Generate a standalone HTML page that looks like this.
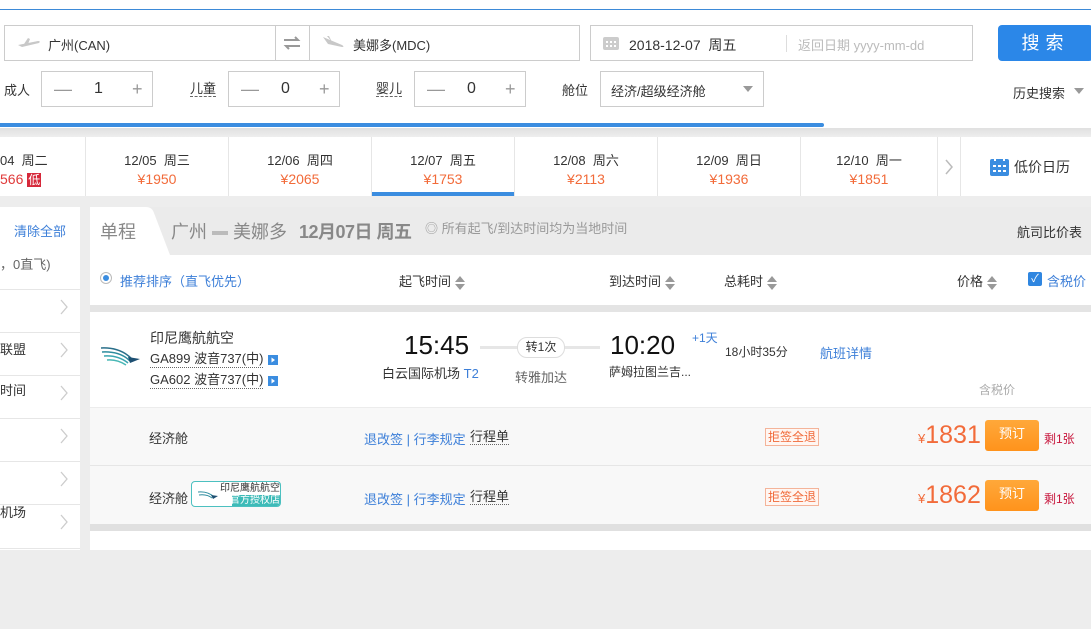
<!DOCTYPE html>
<html><head><meta charset="utf-8"><style>
*{margin:0;padding:0;box-sizing:border-box}
body{width:1091px;height:550px;overflow:hidden;background:#ededed;font-family:"Liberation Sans","Noto Sans CJK SC",sans-serif;font-size:13px;color:#333;position:relative}
.a{position:absolute;white-space:nowrap}
.box{position:absolute;border:1px solid #ccc;background:#fff}
.cnt{position:absolute;border:1px solid #ccc;background:#fff;height:36px;top:71px;width:112px}
.cnt span{position:absolute;top:7px;font-size:18px;color:#999}
.cnt b{position:absolute;top:8px;left:52px;font-weight:normal;font-size:16px;color:#333}
.cell{position:absolute;top:137px;height:59px;background:#fff;border-right:1px solid #e6e6e6;text-align:center;font-size:13px}
.cell .d{margin-top:13px;color:#333}
.cell .p{color:#f26b3a;font-size:14px;margin-top:2px}
.sb{position:absolute;left:0;width:80px;height:1px;background:#e6e6e6}
.chev{position:absolute;left:61px;width:8px;height:14px}
.blue{color:#3d7fd8}
.srt{display:inline-block;vertical-align:middle;margin-left:4px;width:10px;height:14px;position:relative}
.srt:before{content:"";position:absolute;left:0;top:0;border:5px solid transparent;border-bottom:6px solid #999;border-top:0}
.srt:after{content:"";position:absolute;left:0;top:8px;border:5px solid transparent;border-top:6px solid #999;border-bottom:0}
</style></head><body>
<div class="a" style="left:0;top:0;width:1091px;height:128px;background:#fff"></div>
<div class="a" style="left:0;top:9px;width:1091px;height:1px;background:#3d8ad8"></div>
<div class="box" style="left:4px;top:25px;width:576px;height:36px"></div>
<div class="a" style="left:275px;top:26px;width:1px;height:34px;background:#ccc"></div>
<div class="a" style="left:309px;top:26px;width:1px;height:34px;background:#ccc"></div>
<svg class="a" style="left:16px;top:36px" width="26" height="14"><path d="M2 9 L22 5 Q25 5 23 7 L6 11 Z M8 8 L12 2 L14 3 L12 8Z" fill="#c8c8c8"/></svg>
<div class="a" style="left:48px;top:35px;font-size:13px">广州(CAN)</div>
<svg class="a" style="left:282px;top:35px" width="20" height="16"><path d="M2 5 H16 L13 2 M18 11 H4 L7 14" stroke="#999" stroke-width="2" fill="none"/></svg>
<svg class="a" style="left:320px;top:34px" width="26" height="16"><path d="M3 3 L22 11 Q25 13 22 13 L8 10Z M7 2 L9 2 L12 8" fill="#c8c8c8"/></svg>
<div class="a" style="left:353px;top:35px">美娜多(MDC)</div>
<div class="box" style="left:590px;top:25px;width:383px;height:36px"></div>
<svg class="a" style="left:602px;top:34px" width="18" height="17"><rect x="1" y="3" width="16" height="13" rx="2" fill="#ccc"/><g fill="#fff"><rect x="4" y="7" width="2" height="2"/><rect x="8" y="7" width="2" height="2"/><rect x="12" y="7" width="2" height="2"/><rect x="4" y="11" width="2" height="2"/><rect x="8" y="11" width="2" height="2"/><rect x="12" y="11" width="2" height="2"/></g></svg>
<div class="a" style="left:629px;top:35px;font-size:14px">2018-12-07&nbsp;&nbsp;周五</div>
<div class="a" style="left:786px;top:35px;width:1px;height:17px;background:#ddd"></div>
<div class="a" style="left:798px;top:35px;color:#bbb">返回日期 yyyy-mm-dd</div>
<div class="a" style="left:998px;top:25px;width:95px;height:36px;background:#2b87e8;border-radius:4px;color:#fff;font-size:18px;text-align:center;line-height:36px;letter-spacing:6px">搜索</div>
<div class="a" style="left:4px;top:80px">成人</div>
<div class="cnt" style="left:41px"><span style="left:12px">—</span><b>1</b><span style="left:90px">+</span></div>
<div class="a" style="left:190px;top:81px;border-bottom:1px dashed #666;line-height:15px">儿童</div>
<div class="cnt" style="left:228px"><span style="left:12px">—</span><b>0</b><span style="left:90px">+</span></div>
<div class="a" style="left:376px;top:81px;border-bottom:1px dashed #666;line-height:15px">婴儿</div>
<div class="cnt" style="left:414px"><span style="left:12px">—</span><b>0</b><span style="left:90px">+</span></div>
<div class="a" style="left:562px;top:80px">舱位</div>
<div class="box" style="left:600px;top:71px;width:164px;height:36px"></div>
<div class="a" style="left:611px;top:81px">经济/超级经济舱</div>
<div class="a" style="left:743px;top:86px;border:5px solid transparent;border-top:6px solid #999"></div>
<div class="a" style="left:1013px;top:83px">历史搜索</div>
<div class="a" style="left:1074px;top:88px;border:5px solid transparent;border-top:6px solid #999"></div>
<div class="a" style="left:0;top:123px;width:824px;height:4px;background:#3b8de0;border-radius:0 2px 2px 0"></div>
<div class="a" style="left:0;top:128px;width:1091px;height:9px;background:linear-gradient(#e0e0e0,#eee)"></div>
<div class="cell" style="left:0;width:86px"><div class="d" style="text-align:left">04&nbsp;&nbsp;周二</div><div class="p" style="text-align:left;color:#e03a3a">566 <span style="background:#d6283a;color:#fff;font-size:12px;padding:0 1px">低</span></div></div>
<div class="cell" style="left:86px;width:143px"><div class="d">12/05&nbsp;&nbsp;周三</div><div class="p">¥1950</div></div>
<div class="cell" style="left:229px;width:143px"><div class="d">12/06&nbsp;&nbsp;周四</div><div class="p">¥2065</div></div>
<div class="cell" style="left:372px;width:143px"><div class="d">12/07&nbsp;&nbsp;周五</div><div class="p">¥1753</div></div>
<div class="a" style="left:372px;top:192px;width:142px;height:4px;background:#3b8de0"></div>
<div class="cell" style="left:515px;width:143px"><div class="d">12/08&nbsp;&nbsp;周六</div><div class="p">¥2113</div></div>
<div class="cell" style="left:658px;width:143px"><div class="d">12/09&nbsp;&nbsp;周日</div><div class="p">¥1936</div></div>
<div class="cell" style="left:801px;width:137px"><div class="d">12/10&nbsp;&nbsp;周一</div><div class="p">¥1851</div></div>
<div class="cell" style="left:938px;width:23px"></div>
<svg class="a" style="left:945px;top:159px" width="9" height="16"><path d="M1 1 L7 8 L1 15" stroke="#bbb" stroke-width="1.5" fill="none"/></svg>
<div class="cell" style="left:961px;width:130px;border:none"></div>
<svg class="a" style="left:990px;top:157px" width="19" height="19"><rect x="0" y="2" width="19" height="17" rx="2" fill="#3b8de0"/><g fill="#fff"><rect x="4" y="0" width="2" height="4"/><rect x="13" y="0" width="2" height="4"/><rect x="3" y="8" width="3" height="2"/><rect x="8" y="8" width="3" height="2"/><rect x="13" y="8" width="3" height="2"/><rect x="3" y="13" width="3" height="2"/><rect x="8" y="13" width="3" height="2"/><rect x="13" y="13" width="3" height="2"/></g></svg>
<div class="a" style="left:1014px;top:157px;font-size:14px">低价日历</div>
<!-- sidebar -->
<div class="a" style="left:0;top:207px;width:80px;height:343px;background:#fff"></div>
<div class="a blue" style="left:14px;top:221px">清除全部</div>
<div class="a" style="left:0;top:254px;color:#666">，0直飞)</div>
<div class="sb" style="top:289px"></div>
<div class="sb" style="top:332px"></div><div class="a" style="left:0;top:339px">联盟</div>
<div class="sb" style="top:375px"></div><div class="a" style="left:0;top:380px">时间</div>
<div class="sb" style="top:418px"></div>
<div class="sb" style="top:461px"></div>
<div class="sb" style="top:504px"></div><div class="a" style="left:0;top:502px">机场</div>
<div class="sb" style="top:548px"></div>
<svg class="a" style="left:60px;top:299px" width="9" height="330"><g stroke="#ccc" stroke-width="1.3" fill="none"><path d="M1 1 L7 8 L1 15"/><path d="M1 44 L7 51 L1 58"/><path d="M1 87 L7 94 L1 101"/><path d="M1 130 L7 137 L1 144"/><path d="M1 173 L7 180 L1 187"/><path d="M1 216 L7 223 L1 230"/></g></svg>
<!-- main header -->
<div class="a" style="left:90px;top:207px;width:1001px;height:48px;background:#ebebeb"></div>
<svg class="a" style="left:90px;top:207px" width="80" height="48"><path d="M0 0 H56 Q62 0 64 6 L80 48 H0Z" fill="#fff"/></svg>
<div class="a" style="left:100px;top:218px;font-size:18px;color:#888">单程</div>
<div class="a" style="left:171px;top:218px;font-size:18px;color:#888">广州 <span style="display:inline-block;width:16px;height:4px;background:#bbb;vertical-align:middle"></span> 美娜多</div>
<div class="a" style="left:299px;top:218px;font-size:18px;color:#888;font-weight:bold;letter-spacing:-0.5px">12月07日 周五</div>
<div class="a" style="left:425px;top:218px;color:#999">◎ 所有起飞/到达时间均为当地时间</div>
<div class="a" style="left:1017px;top:222px">航司比价表</div>
<!-- sort row -->
<div class="a" style="left:90px;top:255px;width:1001px;height:50px;background:#fff"></div>
<div class="a" style="left:100px;top:272px;width:12px;height:12px;border:1px solid #bbb;border-radius:50%"></div>
<div class="a" style="left:103px;top:275px;width:6px;height:6px;background:#3b8de0;border-radius:50%"></div>
<div class="a blue" style="left:120px;top:271px">推荐排序（直飞优先）</div>
<div class="a" style="left:399px;top:271px">起飞时间<span class="srt"></span></div>
<div class="a" style="left:609px;top:271px">到达时间<span class="srt"></span></div>
<div class="a" style="left:724px;top:271px">总耗时<span class="srt"></span></div>
<div class="a" style="left:957px;top:271px">价格<span class="srt"></span></div>
<div class="a" style="left:1028px;top:272px;width:14px;height:14px;background:#2f86e0;border-radius:2px;color:#fff;font-size:11px;line-height:14px;text-align:center">✓</div>
<div class="a blue" style="left:1047px;top:271px">含税价</div>
<div class="a" style="left:90px;top:305px;width:1001px;height:7px;background:#e4e4e4"></div>
<!-- flight card -->
<div class="a" style="left:90px;top:312px;width:1001px;height:95px;background:#fff"></div>
<svg class="a" style="left:100px;top:345px" width="42" height="26"><g fill="none" stroke="#2a6f8a" stroke-width="1.5"><path d="M1 3 Q20 2 32 14"/><path d="M2 7 Q20 6 30 16" stroke="#2d8c9e"/><path d="M4 11 Q18 10 28 18" stroke="#3aa5b0"/><path d="M7 15 Q17 14 26 20" stroke="#48b7b5"/></g><path d="M28 12 L40 14 L30 18Z" fill="#1d4f72"/></svg>
<div class="a" style="left:150px;top:328px;font-size:14px">印尼鹰航航空</div>
<div class="a" style="left:150px;top:351px;border-bottom:1px dotted #666;line-height:16px">GA899 波音737(中)</div>
<div class="a" style="left:150px;top:372px;border-bottom:1px dotted #666;line-height:16px">GA602 波音737(中)</div>
<svg class="a" style="left:268px;top:355px" width="10" height="31"><rect width="10" height="10" fill="#3b8de0"/><rect y="21" width="10" height="10" fill="#3b8de0"/><path d="M3.5 2.5 L7 5 L3.5 7.5Z M3.5 23.5 L7 26 L3.5 28.5Z" fill="#fff"/></svg>
<div class="a" style="left:404px;top:330px;font-size:26px;color:#111">15:45</div>
<div class="a" style="left:382px;top:363px">白云国际机场 <span class="blue">T2</span></div>
<div class="a" style="left:480px;top:346px;width:120px;height:3px;background:#e6e6e6"></div>
<div class="a" style="left:517px;top:337px;width:48px;height:21px;border:1px solid #ddd;border-radius:10px;background:#fff;text-align:center;line-height:19px;font-size:12px">转1次</div>
<div class="a" style="left:515px;top:367px;color:#666">转雅加达</div>
<div class="a" style="left:610px;top:330px;font-size:26px;color:#111">10:20</div>
<div class="a" style="left:692px;top:329px;font-size:12px"><span class="blue">+1天</span></div>
<div class="a" style="left:609px;top:363px;font-size:12px">萨姆拉图兰吉...</div>
<div class="a" style="left:725px;top:343px;font-size:12px">18小时35分</div>
<div class="a blue" style="left:820px;top:343px">航班详情</div>
<div class="a" style="left:979px;top:381px;color:#aaa;font-size:12px">含税价</div>
<!-- row 1 -->
<div class="a" style="left:90px;top:407px;width:1001px;height:58px;background:#f8f8f8;border-top:1px solid #ececec"></div>
<div class="a" style="left:149px;top:428px">经济舱</div>
<div class="a blue" style="left:364px;top:429px">退改签 | 行李规定</div>
<div class="a" style="left:470px;top:429px;border-bottom:1px dotted #666;line-height:15px">行程单</div>
<div class="a" style="left:765px;top:428px;border:1px solid #f4b49a;color:#f06a3a;font-size:12px;padding:0 2px;line-height:16px;background:#fff6f2">拒签全退</div>
<div class="a" style="left:918px;top:421px;color:#f26b3a"><span style="font-size:13px">¥</span><span style="font-size:25px">1831</span></div>
<div class="a" style="left:985px;top:420px;width:54px;height:31px;background:linear-gradient(#ffa83a,#ff931c);border-radius:3px;color:#fff;text-align:center;line-height:28px">预订</div>
<div class="a" style="left:1044px;top:430px;color:#c8163c;font-size:12px">剩1张</div>
<!-- row 2 -->
<div class="a" style="left:90px;top:465px;width:1001px;height:59px;background:#f8f8f8;border-top:1px solid #e6e6e6"></div>
<div class="a" style="left:149px;top:488px">经济舱</div>
<div class="a" style="left:191px;top:481px;width:90px;height:26px;border:1px solid #4cc0c0;border-radius:4px;background:#fff;overflow:hidden">
<div style="position:absolute;left:40px;top:13px;width:50px;height:13px;background:#3dbbb8"></div>
<div style="position:absolute;left:28px;top:1px;font-size:10px;color:#333;line-height:11px">印尼鹰航航空</div>
<div style="position:absolute;left:38px;top:13px;font-size:10px;color:#fff;line-height:12px">官方授权店</div>
<svg style="position:absolute;left:6px;top:8px" width="20" height="10"><path d="M0 2 Q10 1 16 7 M1 5 Q9 4 14 8" stroke="#2d8c9e" fill="none"/><path d="M13 5 L20 6 L15 9Z" fill="#1d4f72"/></svg>
</div>
<div class="a blue" style="left:364px;top:489px">退改签 | 行李规定</div>
<div class="a" style="left:470px;top:489px;border-bottom:1px dotted #666;line-height:15px">行程单</div>
<div class="a" style="left:765px;top:488px;border:1px solid #f4b49a;color:#f06a3a;font-size:12px;padding:0 2px;line-height:16px;background:#fff6f2">拒签全退</div>
<div class="a" style="left:918px;top:481px;color:#f26b3a"><span style="font-size:13px">¥</span><span style="font-size:25px">1862</span></div>
<div class="a" style="left:985px;top:480px;width:54px;height:31px;background:linear-gradient(#ffa83a,#ff931c);border-radius:3px;color:#fff;text-align:center;line-height:28px">预订</div>
<div class="a" style="left:1044px;top:490px;color:#c8163c;font-size:12px">剩1张</div>
<div class="a" style="left:90px;top:524px;width:1001px;height:7px;background:#e0e0e0"></div>
<div class="a" style="left:90px;top:531px;width:1001px;height:19px;background:#fff"></div>
</body></html>
